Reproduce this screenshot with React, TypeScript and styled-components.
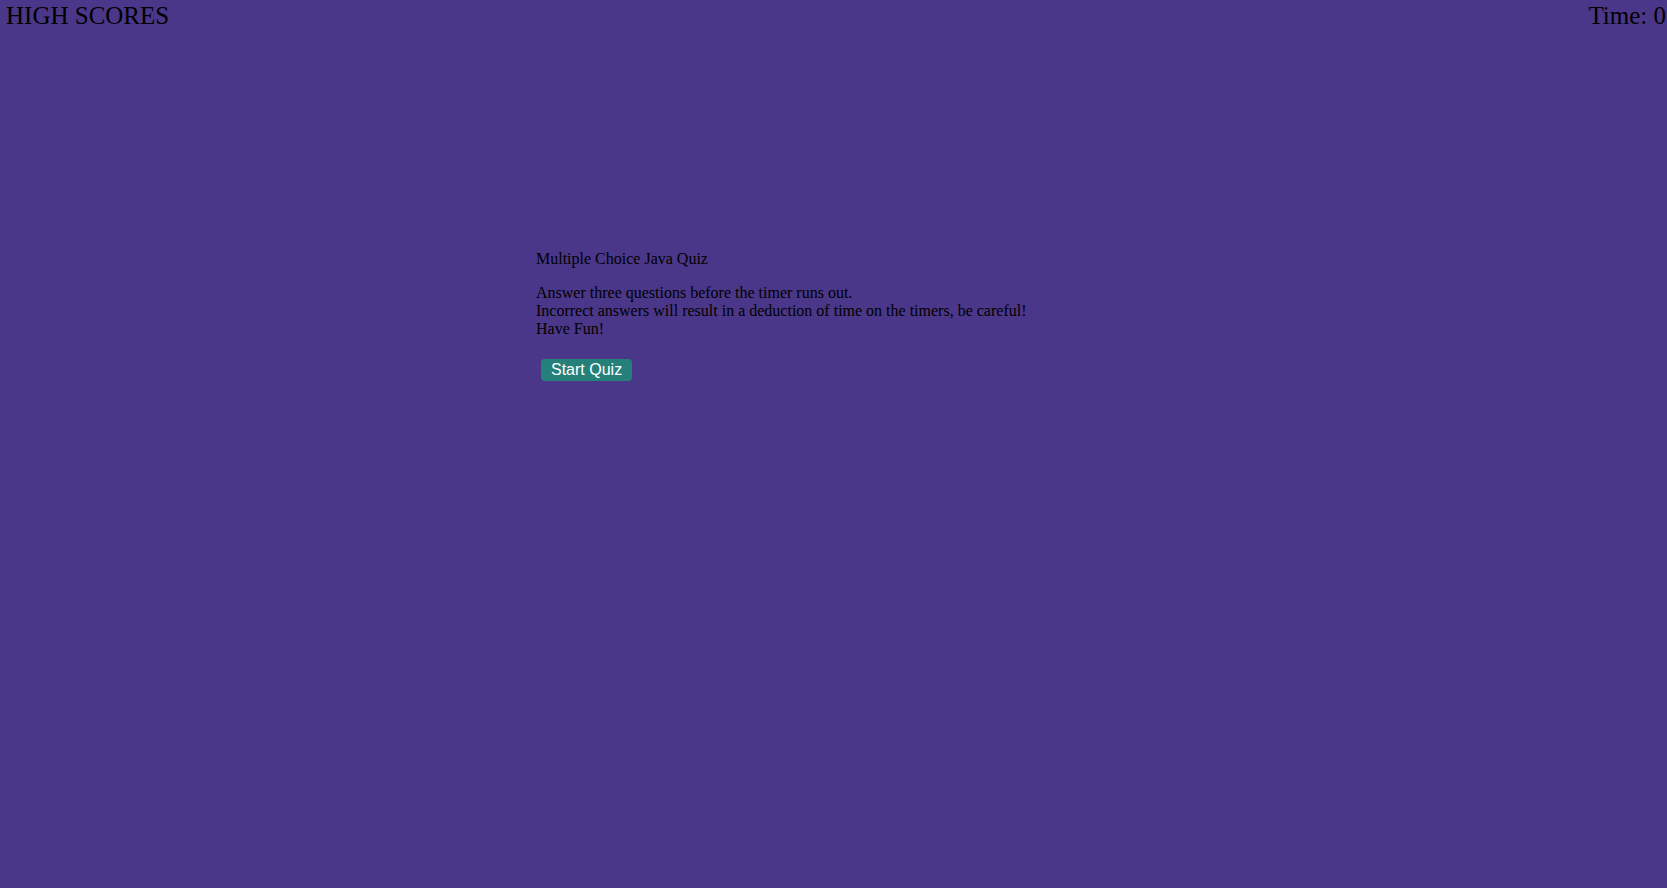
import React from "react";
import styled, { createGlobalStyle } from "styled-components";

const Global = createGlobalStyle`
  html, body { margin: 0; padding: 0; }
  body {
    background: #4a3789;
    font-family: "Liberation Serif", "Times New Roman", serif;
    color: #000;
    min-height: 888px;
  }
`;

const Header = styled.header`
  display: flex;
  justify-content: space-between;
  align-items: flex-start;
  padding: 1px 1px 0 6px;
  font-size: 25px;
  line-height: 30px;
`;

const HeaderItem = styled.div`
  white-space: nowrap;
`;

const Main = styled.main`
  width: 595px;
  margin: 219px auto 0;
  font-size: 16px;
  line-height: 18px;
`;

const Para = styled.p`
  margin: 0 0 16px;
`;

const StartButton = styled.button`
  margin: 5px 5px 0;
  padding: 0 10px;
  height: 22px;
  border: none;
  border-radius: 4px;
  background: #26807a;
  color: #fff;
  font-family: "Liberation Sans", Arial, sans-serif;
  font-size: 16px;
  line-height: 22px;
  cursor: pointer;
`;

export default function App() {
  return (
    <>
      <Global />
      <Header>
        <HeaderItem>HIGH SCORES</HeaderItem>
        <HeaderItem>Time: 0</HeaderItem>
      </Header>
      <Main>
        <Para>Multiple Choice Java Quiz</Para>
        <Para>
          Answer three questions before the timer runs out.
          <br />
          Incorrect answers will result in a deduction of time on the timers, be careful!
          <br />
          Have Fun!
        </Para>
        <StartButton>Start Quiz</StartButton>
      </Main>
    </>
  );
}
